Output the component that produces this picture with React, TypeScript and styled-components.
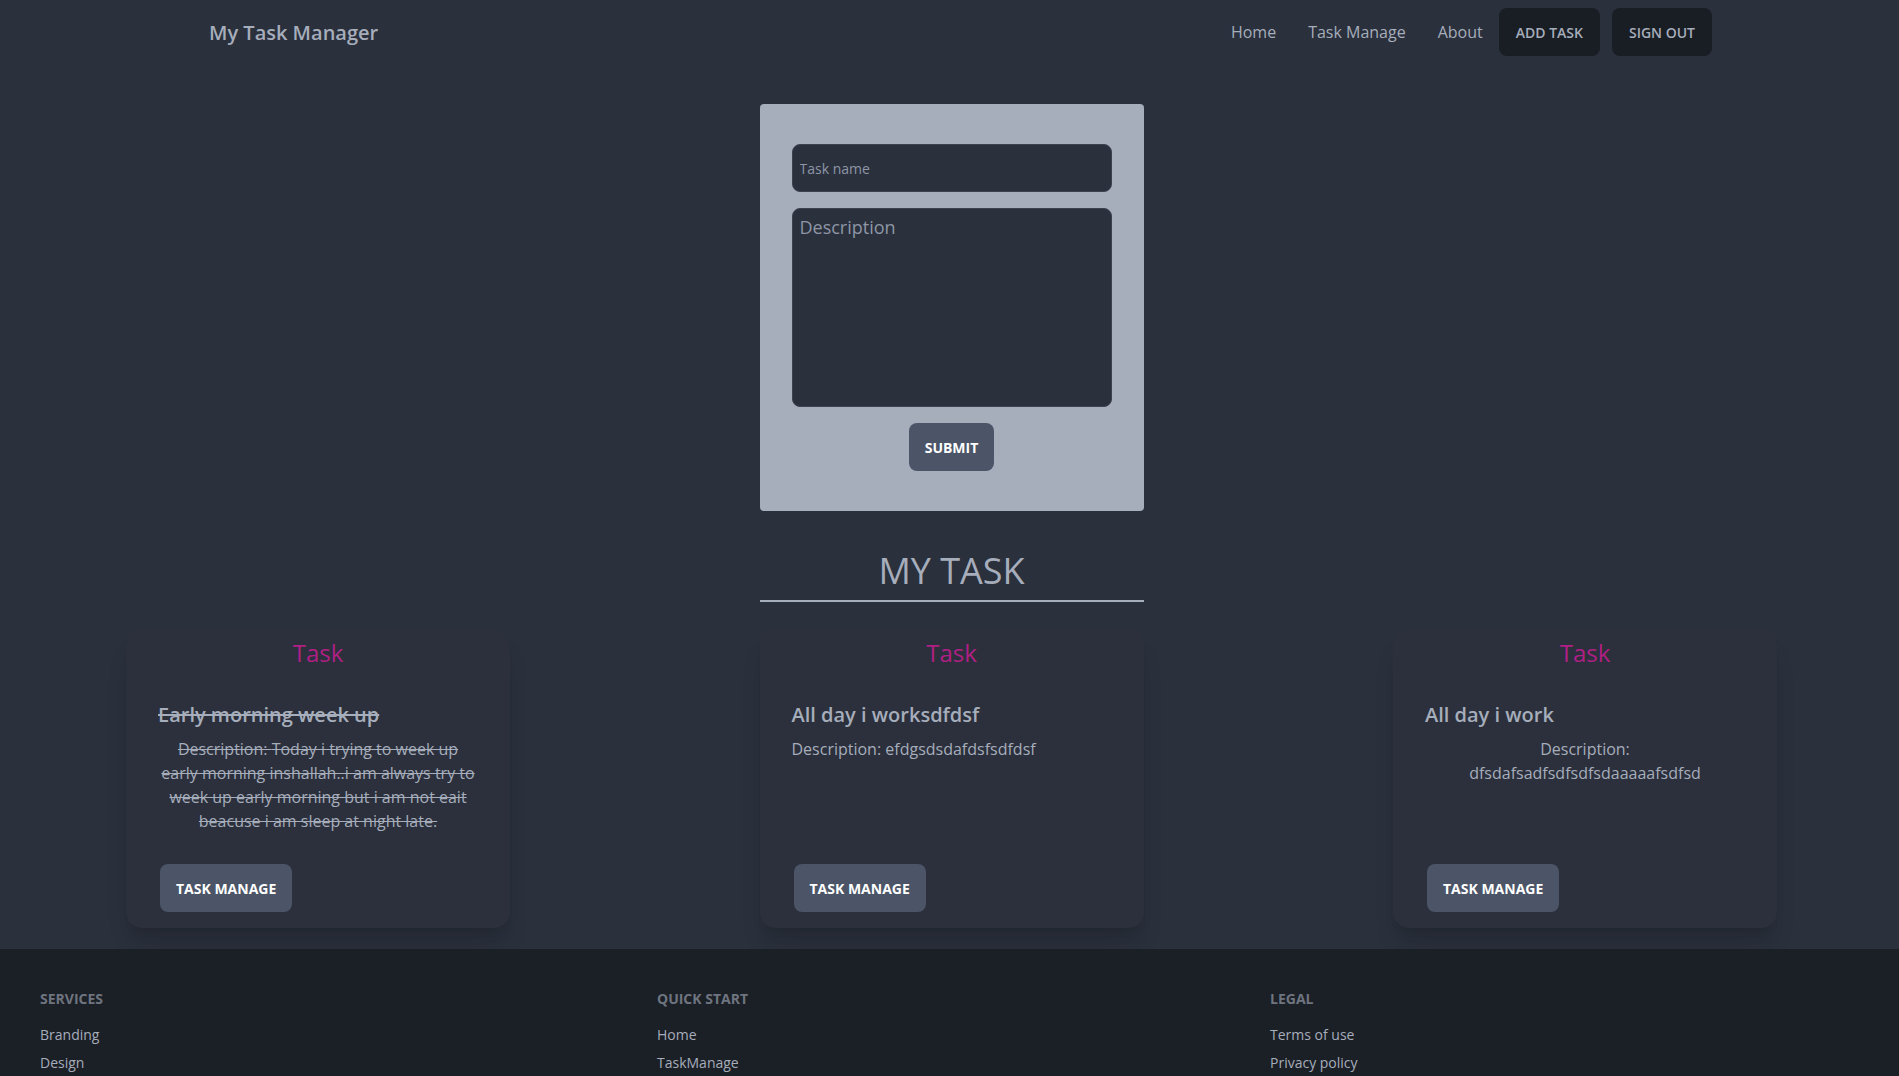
import React from "react";
import styled, { createGlobalStyle } from "styled-components";

const Global = createGlobalStyle`
  html, body { margin: 0; padding: 0; background: #2a303c; }
  body { font-family: "Open Sans", "Liberation Sans", sans-serif; color: #a6adbb; }
  * { box-sizing: border-box; }
`;

const Page = styled.div`
  min-height: 100vh;
  background: #2a303c;
  display: flex;
  flex-direction: column;
`;

const Nav = styled.nav`
  height: 64px;
  display: flex;
  align-items: center;
  justify-content: space-between;
  padding: 8px 187px 8px 193px;
`;

const Brand = styled.a`
  height: 48px;
  display: flex;
  align-items: center;
  padding: 0 16px;
  font-size: 20px;
  font-weight: 600;
  color: #a6adbb;
  text-decoration: none;
`;

const NavRight = styled.div`
  display: flex;
  align-items: center;
`;

const Menu = styled.ul`
  list-style: none;
  margin: 0;
  padding: 0;
  display: flex;
  align-items: center;
`;

const MenuLink = styled.a`
  display: block;
  padding: 12px 16px;
  font-size: 16px;
  line-height: 24px;
  color: #a6adbb;
  text-decoration: none;
`;

const NavButton = styled.button<{ $gap?: number }>`
  height: 48px;
  padding: 0 17px;
  margin-left: ${(p) => p.$gap ?? 0}px;
  border: none;
  border-radius: 8px;
  background: #191d24;
  color: #a6adbb;
  font-family: inherit;
  font-size: 14px;
  font-weight: 600;
  text-transform: uppercase;
`;

const Main = styled.main`
  display: flex;
  flex-direction: column;
  align-items: center;
  padding-left: 4px;
`;

const FormCard = styled.form`
  width: 384px;
  margin-top: 40px;
  background: #a6adbb;
  border-radius: 4px;
  padding: 40px 32px;
  display: flex;
  flex-direction: column;
  align-items: center;
`;

const fieldBase = `
  width: 100%;
  background: #2a303c;
  border: 1px solid #3c4250;
  border-radius: 8px;
  color: #a6adbb;
  font-family: "Open Sans", "Liberation Sans", sans-serif;
  outline: none;
  &::placeholder { color: #8e96a6; opacity: 1; }
`;

const TextInput = styled.input`
  ${fieldBase}
  height: 48px;
  padding: 0 7px;
  font-size: 14px;
`;

const TextArea = styled.textarea`
  ${fieldBase}
  height: 199px;
  margin-top: 16px;
  padding: 6px 7px;
  font-size: 18px;
  line-height: normal;
  resize: none;
`;

const SolidButton = styled.button`
  height: 48px;
  padding: 0 16px;
  border: none;
  border-radius: 8px;
  background: #4b5567;
  color: #ffffff;
  font-family: inherit;
  font-size: 14px;
  font-weight: 700;
  text-transform: uppercase;
`;

const SubmitButton = styled(SolidButton)`
  margin-top: 16px;
`;

const Heading = styled.h1`
  width: 384px;
  margin: 40px 0 0;
  padding-bottom: 9px;
  border-bottom: 2px solid #a6adbb;
  text-align: center;
  font-size: 36px;
  line-height: 40px;
  font-weight: 400;
  color: #a6adbb;
`;

const CardGrid = styled.section`
  width: 100%;
  display: grid;
  grid-template-columns: repeat(3, 1fr);
  column-gap: 5.5px;
  justify-items: center;
  margin-top: 27px;
  margin-bottom: 21px;
`;

const Card = styled.article`
  width: 384px;
  background: #2b303c;
  border-radius: 16px;
  box-shadow: 0 20px 25px -5px rgba(0, 0, 0, 0.12), 0 8px 10px -6px rgba(0, 0, 0, 0.12);
  padding: 8px 32px 16px;
  display: flex;
  flex-direction: column;
`;

const CardLabel = styled.h2`
  margin: 0 0 32px;
  text-align: center;
  font-size: 24px;
  line-height: 32px;
  font-weight: 400;
  color: #b01f84;
`;

const CardTitle = styled.h3<{ $done?: boolean }>`
  margin: 0;
  font-size: 20px;
  line-height: 28px;
  font-weight: 600;
  color: #a6adbb;
  text-decoration: ${(p) => (p.$done ? "line-through" : "none")};
`;

const CardText = styled.p<{ $done?: boolean; $align?: string }>`
  flex: 1;
  margin: 8px 0 0;
  font-size: 16px;
  line-height: 24px;
  color: #a6adbb;
  text-align: ${(p) => p.$align ?? "center"};
  text-decoration: ${(p) => (p.$done ? "line-through" : "none")};
`;

const CardActions = styled.div`
  display: flex;
  margin-top: 31px;
  padding-left: 2px;
`;

const Footer = styled.footer`
  background: #1b1f26;
  padding: 40px;
  display: grid;
  grid-template-columns: 601px 597px 1fr;
  column-gap: 16px;
`;

const FooterCol = styled.nav`
  display: flex;
  flex-direction: column;
  align-items: flex-start;
  gap: 8px;
`;

const FooterTitle = styled.span`
  font-size: 14px;
  line-height: 20px;
  font-weight: 700;
  text-transform: uppercase;
  color: #a6adbb;
  opacity: 0.6;
  margin-bottom: 8px;
`;

const FooterLink = styled.a`
  font-size: 14px;
  line-height: 20px;
  color: #a6adbb;
  text-decoration: none;
`;

const tasks = [
  {
    title: "Early morning week up",
    description:
      "Today i trying to week up early morning inshallah..i am always try to week up early morning but i am not eait beacuse i am sleep at night late.",
    done: true,
    align: "center",
  },
  {
    title: "All day i worksdfdsf",
    description: "efdgsdsdafdsfsdfdsf",
    done: false,
    align: "left",
  },
  {
    title: "All day i work",
    description: "dfsdafsadfsdfsdfsdaaaaafsdfsd",
    done: false,
    align: "center",
  },
];

const footerCols = [
  { title: "Services", links: ["Branding", "Design", "Marketing", "Advertisement"] },
  { title: "Quick Start", links: ["Home", "TaskManage", "About"] },
  { title: "Legal", links: ["Terms of use", "Privacy policy", "Cookie policy"] },
];

export default function App() {
  return (
    <Page>
      <Global />
      <Nav>
        <Brand>My Task Manager</Brand>
        <NavRight>
          <Menu>
            <li><MenuLink>Home</MenuLink></li>
            <li><MenuLink>Task Manage</MenuLink></li>
            <li><MenuLink>About</MenuLink></li>
          </Menu>
          <NavButton>Add Task</NavButton>
          <NavButton $gap={12}>Sign Out</NavButton>
        </NavRight>
      </Nav>
      <Main>
        <FormCard onSubmit={(e) => e.preventDefault()}>
          <TextInput type="text" placeholder="Task name" />
          <TextArea placeholder="Description" />
          <SubmitButton type="submit">Submit</SubmitButton>
        </FormCard>
        <Heading>MY TASK</Heading>
        <CardGrid>
          {tasks.map((t, i) => (
            <Card key={i}>
              <CardLabel>Task</CardLabel>
              <CardTitle $done={t.done}>{t.title}</CardTitle>
              <CardText $done={t.done} $align={t.align}>
                Description: {t.description}
              </CardText>
              <CardActions>
                <SolidButton>Task Manage</SolidButton>
              </CardActions>
            </Card>
          ))}
        </CardGrid>
      </Main>
      <Footer>
        {footerCols.map((c) => (
          <FooterCol key={c.title}>
            <FooterTitle>{c.title}</FooterTitle>
            {c.links.map((l) => (
              <FooterLink key={l}>{l}</FooterLink>
            ))}
          </FooterCol>
        ))}
      </Footer>
    </Page>
  );
}
